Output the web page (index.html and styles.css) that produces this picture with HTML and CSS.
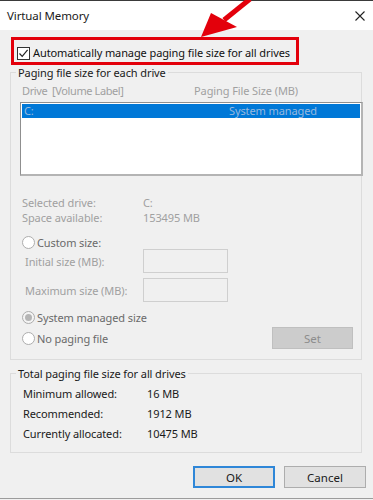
FILE: index.html
```html
<!DOCTYPE html>
<html lang="en">
<head>
  <meta charset="UTF-8">
  <title>Virtual Memory</title>
  <link rel="stylesheet" href="styles.css">
</head>
<body>
  <div class="window">
    <div class="titlebar">
      <span class="title">Virtual Memory</span>
      <svg class="close" width="10" height="10" viewBox="0 0 10 10">
        <path d="M0.5 0.5 L9.5 9.5 M9.5 0.5 L0.5 9.5" stroke="#222" stroke-width="1.1" fill="none"/>
      </svg>
    </div>

    <div class="content">
      <div class="highlight">
        <label class="check-row">
          <span class="checkbox">
            <svg width="11" height="11" viewBox="0 0 11 11"><path d="M1.5 5.5 L4.2 8.3 L9.6 1.8" stroke="#222" stroke-width="1.2" fill="none"/></svg>
          </span>
          Automatically manage paging file size for all drives
        </label>
      </div>

      <fieldset class="group group-drives">
        <legend>Paging file size for each drive</legend>
        <div class="list-head">
          <span class="col-drive">Drive&nbsp; [Volume Label]</span>
          <span class="col-size">Paging File Size (MB)</span>
        </div>
        <div class="listbox">
          <div class="list-row selected">
            <span class="col-drive">C:</span>
            <span class="col-size">System managed</span>
          </div>
        </div>

        <div class="info">
          <span>Selected drive:</span><span>C:</span>
          <span>Space available:</span><span>153495 MB</span>
        </div>

        <div class="radio-row custom"><span class="radio"></span>Custom size:</div>
        <div class="size-fields">
          <span>Initial size (MB):</span><span class="field"></span>
          <span>Maximum size (MB):</span><span class="field"></span>
        </div>

        <div class="bottom-row">
          <div class="radios">
            <div class="radio-row"><span class="radio checked"></span>System managed size</div>
            <div class="radio-row"><span class="radio"></span>No paging file</div>
          </div>
          <button class="btn btn-set">Set</button>
        </div>
      </fieldset>

      <fieldset class="group group-total">
        <legend>Total paging file size for all drives</legend>
        <div class="totals">
          <span>Minimum allowed:</span><span>16 MB</span>
          <span>Recommended:</span><span>1912 MB</span>
          <span>Currently allocated:</span><span>10475 MB</span>
        </div>
      </fieldset>

      <div class="buttons">
        <button class="btn btn-default">OK</button>
        <button class="btn">Cancel</button>
      </div>
    </div>

    <!-- annotation arrow pointing at the checkbox -->
    <svg class="arrow" width="70" height="45" viewBox="190 0 70 45">
      <path d="M250 -1 L224 20" stroke="#e3000b" stroke-width="5" fill="none"/>
      <polygon points="201,37 211,13 237,27" fill="#e3000b"/>
    </svg>
  </div>
</body>
</html>
```

FILE: styles.css
```css
* {
  box-sizing: border-box;
}
body {
  margin: 0;
  background: #f0f0f0;
  font-family: "Noto Sans", "Open Sans", sans-serif;
  font-size: 11px;
  letter-spacing: -0.1px;
  color: #1a1a1a;
}
.window {
  position: relative;
  width: 373px;
  height: 499px;
  background: #f0f0f0;
  border-bottom: 1px solid #9c9c9c;
  overflow: hidden;
}
.titlebar {
  height: 30px;
  background: #fff;
  border-top: 1px solid #3a3a3a;
  display: flex;
  align-items: center;
  justify-content: space-between;
  padding: 0 8px 0 7px;
}
.title {
  font-size: 11.5px;
  color: #1a1a1a;
}
.content {
  padding: 7px 7px 0 10px;
}
.highlight {
  width: 288px;
  height: 28px;
  margin-left: 1px;
  border: 3px solid #e3000b;
  padding: 6px 0 0 3px;
}
.check-row {
  display: flex;
  align-items: center;
  gap: 3px;
  line-height: 14px;
  font-size: 11px;
  white-space: nowrap;
  color: #111;
}
.checkbox {
  flex: none;
  width: 13px;
  height: 13px;
  border: 1px solid #333;
  background: #fff;
  display: flex;
  align-items: center;
  justify-content: center;
}
.group {
  margin: 0 4px 0 0;
  padding: 0;
  border: 1px solid #dcdcdc;
  min-width: 0;
}
.group legend {
  margin-left: 5px;
  padding: 0 2px;
  line-height: 15px;
  font-size: 11px;
  color: #1a1a1a;
}
.group-drives {
  padding-bottom: 10px;
}
.list-head {
  display: flex;
  margin-top: 3px;
  padding-left: 11px;
  line-height: 16px;
  color: #a0a0a0;
}
.list-head .col-drive {
  letter-spacing: -0.4px;
}
.col-drive {
  width: 172px;
}
.listbox {
  margin: 3px -2px 0 9px;
  height: 74px;
  background: #fff;
  border: 1px solid #8f8f8f;
  border-right-width: 2px;
  border-bottom-width: 2px;
  border-bottom-color: #b4b4b4;
  border-right-color: #b4b4b4;
  padding: 1px;
}
.list-row {
  display: flex;
  height: 14px;
  line-height: 14px;
  padding-left: 2px;
}
.list-row .col-drive {
  width: 205px;
}
.selected {
  background: #0078d7;
  color: #98b9de;
}
.info,
.size-fields,
.totals {
  display: grid;
  grid-template-columns: 121px auto;
  line-height: 15px;
}
.info {
  margin-top: 19px;
  padding-left: 11px;
  color: #a0a0a0;
}
.radio-row {
  display: flex;
  align-items: center;
  gap: 2px;
  height: 15px;
  padding-left: 11px;
  color: #6a6a6a;
}
.radio-row.custom {
  margin-top: 10px;
  margin-bottom: -1px;
}
.radio {
  flex: none;
  width: 13px;
  height: 13px;
  border-radius: 50%;
  border: 1px solid #adadad;
  background: #fff;
  display: flex;
  align-items: center;
  justify-content: center;
}
.radio.checked {
  background: #f4f4f4;
}
.radio.checked::after {
  content: "";
  width: 7px;
  height: 7px;
  border-radius: 50%;
  background: #b5b5b5;
}
.size-fields {
  grid-template-columns: 118px 85px;
  row-gap: 5px;
  align-items: center;
  padding-left: 14px;
  color: #a0a0a0;
}
.field {
  height: 24px;
  border: 1px solid #cfcfcf;
  background: #f0f0f0;
}
.bottom-row {
  display: flex;
  justify-content: space-between;
  margin-top: 8px;
  padding-right: 8px;
}
.radios {
  display: flex;
  flex-direction: column;
  gap: 6px;
}
.btn {
  width: 82px;
  height: 22px;
  font: inherit;
  font-size: 11.5px;
  background: #e1e1e1;
  border: 1px solid #adadad;
  color: #1a1a1a;
  padding: 0;
}
.btn-set {
  margin-top: 17px;
  width: 81px;
  background: #cccccc;
  border-color: #bfbfbf;
  color: #8c8c8c;
}
.group-total {
  margin-top: 6px;
  padding-bottom: 8px;
}
.totals {
  grid-template-columns: 124px auto;
  margin-top: 3px;
  padding-left: 12px;
  line-height: 20px;
}
.buttons {
  display: flex;
  justify-content: flex-end;
  gap: 9px;
  margin-top: 13px;
}
.btn-default {
  border: 2px solid #2f87d8;
}
.arrow {
  position: absolute;
  left: 190px;
  top: 0;
}
```
